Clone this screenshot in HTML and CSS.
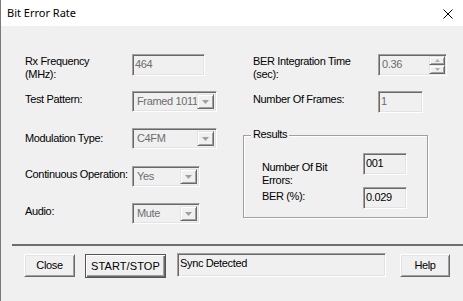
FILE: index.html
```html
<!DOCTYPE html>
<html>
<head>
<meta charset="utf-8">
<link rel="stylesheet" href="styles.css">
</head>
<body>
<div class="window">
  <div class="titlebar">
    <span class="title">Bit Error Rate</span>
    <svg class="close-x" width="10" height="10" viewBox="0 0 10 10"><path d="M0.5 0.5 L9.5 9.5 M9.5 0.5 L0.5 9.5" stroke="#000" stroke-width="1" fill="none"/></svg>
  </div>
  <div class="client">
    <div class="main">
      <div class="col-left">
        <div class="row r1">
          <label class="lbl p1">Rx Frequency<br>(MHz):</label>
          <div class="edit dis w-freq">464</div>
        </div>
        <div class="row r2">
          <label class="lbl p2">Test Pattern:</label>
          <div class="combo w-wide"><span class="val">Framed 1011</span><span class="drop"><svg width="7" height="4" viewBox="0 0 7 4"><path d="M0 0 H7 L3.5 4 Z" fill="#a0a0a0"/></svg></span></div>
        </div>
        <div class="row r3">
          <label class="lbl p4">Modulation Type:</label>
          <div class="combo w-wide"><span class="val">C4FM</span><span class="drop"><svg width="7" height="4" viewBox="0 0 7 4"><path d="M0 0 H7 L3.5 4 Z" fill="#a0a0a0"/></svg></span></div>
        </div>
        <div class="row r4">
          <label class="lbl p2">Continuous Operation:</label>
          <div class="combo w-narrow"><span class="val">Yes</span><span class="drop"><svg width="7" height="4" viewBox="0 0 7 4"><path d="M0 0 H7 L3.5 4 Z" fill="#a0a0a0"/></svg></span></div>
        </div>
        <div class="row r5">
          <label class="lbl p2">Audio:</label>
          <div class="combo w-narrow"><span class="val">Mute</span><span class="drop"><svg width="7" height="4" viewBox="0 0 7 4"><path d="M0 0 H7 L3.5 4 Z" fill="#a0a0a0"/></svg></span></div>
        </div>
      </div>
      <div class="col-right">
        <div class="row r1">
          <label class="rlbl p1">BER Integration Time<br>(sec):</label>
          <div class="spin">
            <span class="spin-val">0.36</span>
            <span class="spin-btns">
              <span class="sb"><svg width="5" height="3" viewBox="0 0 5 3"><path d="M2.5 0 L5 3 H0 Z" fill="#b0b0b0"/></svg></span>
              <span class="sb"><svg width="5" height="3" viewBox="0 0 5 3"><path d="M0 0 H5 L2.5 3 Z" fill="#b0b0b0"/></svg></span>
            </span>
          </div>
        </div>
        <div class="row r-frames">
          <label class="rlbl p2">Number Of Frames:</label>
          <div class="edit dis w-frames">1</div>
        </div>
        <div class="group">
          <span class="legend">Results</span>
          <div class="grow g1">
            <label class="glbl gp1">Number Of Bit<br>Errors:</label>
            <div class="edit w-res">001</div>
          </div>
          <div class="grow">
            <label class="glbl gp2">BER (%):</label>
            <div class="edit w-res">0.029</div>
          </div>
        </div>
      </div>
    </div>
    <div class="sep"></div>
    <div class="footer">
      <button class="btn b-close">Close</button>
      <button class="btn btn-default b-start">START/STOP</button>
      <div class="edit status">Sync Detected</div>
      <button class="btn b-help">Help</button>
    </div>
  </div>
</div>
</body>
</html>
```

FILE: styles.css
```css
* { box-sizing: border-box; }

body {
  margin: 0;
  background: #ffffff;
  font-family: "Liberation Sans", Arial, sans-serif;
  font-size: 11px;
  line-height: 13px;
  letter-spacing: -0.35px;
  color: #000;
}

.window {
  width: 463px;
  height: 301px;
  border-left: 1px solid #7a7a7a;
  display: flex;
  flex-direction: column;
  overflow: hidden;
}

.titlebar {
  height: 26px;
  flex-shrink: 0;
  background: #ffffff;
  display: flex;
  align-items: center;
}

.title {
  font-family: "Noto Sans", sans-serif;
  font-size: 11px;
  letter-spacing: 0;
  padding-left: 6px;
  padding-bottom: 1px;
}

.close-x {
  margin-left: auto;
  margin-right: 10px;
  margin-top: 1px;
}

.client {
  flex: 1;
  background: #f0f0f0;
}

.main {
  display: flex;
  height: 218px;
  padding-top: 28px;
}

.col-left {
  margin-left: 24px;
  width: 193px;
  display: flex;
  flex-direction: column;
}

.row {
  display: flex;
  align-items: flex-start;
  flex-shrink: 0;
}

.r1 { height: 37px; }
.r2 { height: 37px; }
.r3 { height: 38px; }
.r4 { height: 37px; }
.r5 { height: 22px; }
.r-frames { height: 44px; }

.lbl { width: 107px; }
.p1 { padding-top: 1px; }
.p2 { padding-top: 2px; }
.p4 { padding-top: 4px; }

/* sunken edit */
.edit {
  height: 22px;
  border: 1px solid;
  border-color: #a0a0a0 #ffffff #ffffff #a0a0a0;
  box-shadow: inset 1px 1px 0 #696969, inset -1px -1px 0 #e3e3e3;
  background: #f0f0f0;
  padding: 3px 2px 0 2px;
  color: #000;
  white-space: nowrap;
}
.edit.dis { color: #6d6d6d; }

.w-freq { width: 73px; }
.w-frames { width: 45px; }
.w-res { width: 44px; }

/* combo */
.combo {
  height: 21px;
  display: flex;
  align-items: stretch;
  border: 1px solid;
  border-color: #a0a0a0 #ffffff #ffffff #a0a0a0;
  box-shadow: inset 1px 1px 0 #696969, inset -1px -1px 0 #e3e3e3;
  padding: 2px;
  color: #6d6d6d;
  background: #f0f0f0;
}
.w-wide { width: 85px; }
.w-narrow { width: 68px; }

.combo .val {
  flex: 1;
  padding-left: 2px;
  padding-top: 1px;
  white-space: nowrap;
  overflow: hidden;
}

.drop {
  width: 17px;
  display: flex;
  align-items: center;
  justify-content: center;
  border: 1px solid;
  border-color: #e3e3e3 #696969 #696969 #e3e3e3;
  box-shadow: inset 1px 1px 0 #ffffff, inset -1px -1px 0 #a0a0a0;
  background: #f0f0f0;
}
.drop svg { margin-top: 1px; }

/* right column */
.col-right {
  margin-left: 25px;
  width: 204px;
  display: flex;
  flex-direction: column;
}

.rlbl {
  width: 135px;
  padding-left: 10px;
}

.spin {
  width: 69px;
  height: 22px;
  display: flex;
  border: 1px solid;
  border-color: #a0a0a0 #ffffff #ffffff #a0a0a0;
  box-shadow: inset 1px 1px 0 #696969, inset -1px -1px 0 #e3e3e3;
  padding: 1px;
  color: #6d6d6d;
}
.spin-val {
  flex: 1;
  padding: 2px 0 0 2px;
}
.spin-btns {
  width: 16px;
  display: flex;
  flex-direction: column;
}
.sb {
  flex: 1;
  display: flex;
  align-items: center;
  justify-content: center;
  border: 1px solid;
  border-color: #e3e3e3 #696969 #696969 #e3e3e3;
  box-shadow: inset 1px 1px 0 #ffffff, inset -1px -1px 0 #a0a0a0;
}

.group {
  position: relative;
  width: 185px;
  height: 83px;
  border: 1px solid #a0a0a0;
  box-shadow: 1px 1px 0 #ffffff, inset 1px 1px 0 #ffffff;
  padding: 17px 0 0 18px;
}

.legend {
  position: absolute;
  top: -8px;
  left: 7px;
  padding: 0 2px;
  background: #f0f0f0;
}

.grow {
  display: flex;
  align-items: flex-start;
}
.g1 { height: 34px; }
.glbl { width: 101px; }
.gp1 { padding-top: 8px; }
.gp2 { padding-top: 3px; }

/* footer */
.sep {
  margin-left: 11px;
  height: 2px;
  background: #6d6d6d;
}

.footer {
  display: flex;
  align-items: flex-start;
  padding: 8px 0 0 23px;
}

.btn {
  font: inherit;
  letter-spacing: inherit;
  color: #000;
  height: 23px;
  margin: 0;
  padding: 0;
  background: #f0f0f0;
  border: 1px solid;
  border-color: #ffffff #696969 #696969 #ffffff;
  box-shadow: inset 1px 1px 0 #e3e3e3, inset -1px -1px 0 #a0a0a0;
  line-height: 13px;
}

.btn-default {
  border: 1px solid #555555;
  box-shadow: inset 1px 1px 0 #ffffff, inset -1px -1px 0 #696969, inset -2px -2px 0 #a0a0a0;
  letter-spacing: 0.1px;
}

.b-close { width: 51px; }
.b-start { width: 81px; height: 24px; margin-left: 10px; }
.status {
  width: 209px;
  height: 24px;
  margin-left: 11px;
  margin-top: -1px;
  padding: 3px 2px 0 2px;
}
.b-help { width: 50px; margin-left: 14px; }
```
